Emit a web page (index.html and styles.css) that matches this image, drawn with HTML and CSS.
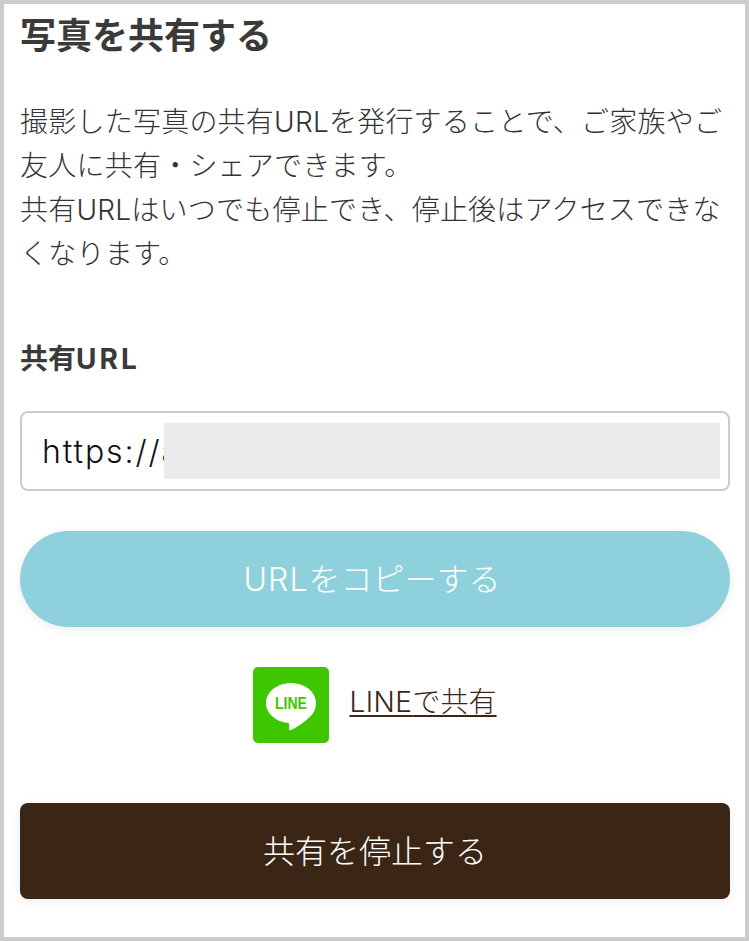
FILE: index.html
```html
<!DOCTYPE html>
<html lang="ja">
<head>
<meta charset="utf-8">
<title>写真を共有する</title>
<link rel="stylesheet" href="styles.css">
</head>
<body>
<main class="page">
  <h1 class="title">写真を共有する</h1>
  <p class="lead">撮影した写真の共有URLを発行することで、ご家族やご友人に共有・シェアできます。<br>共有URLはいつでも停止でき、停止後はアクセスできなくなります。</p>
  <h2 class="label">共有<span class="latin">URL</span></h2>
  <div class="url-box">
    <span class="url-text">https://a</span>
    <span class="url-mask"></span>
  </div>
  <button class="copy-btn" type="button"><span class="latin">URL</span>をコピーする</button>
  <div class="line-row">
    <svg class="line-icon" viewBox="0 0 76 76" aria-hidden="true">
      <rect width="76" height="76" rx="5" fill="#3ec700"/>
      <path d="M38 16c-13.800 0-25 8.900-25 20 0 9.900 8.900 18.200 21 19.800 1 .2 2 .6 2.200 1.300.1.700-.1 4.900-.1 5.400 0 .5.300 1.300 1.500.8 5-2.100 14.600-8.500 20-14 3.700-4 5.400-8.200 5.400-13.300 0-11.100-11.200-20-25-20z" fill="#fff"/>
      <text class="line-logo" x="22" y="42" textLength="32" lengthAdjust="spacingAndGlyphs">LINE</text>
    </svg>
    <a class="line-link" href="#"><span class="latin">LINE</span>で共有</a>
  </div>
  <button class="stop-btn" type="button">共有を停止する</button>
</main>
</body>
</html>
```

FILE: styles.css
```css
* { box-sizing: border-box; }
html, body { margin: 0; padding: 0; }
body {
  background: #fff;
  font-family: Inter, "Noto Sans CJK JP", sans-serif;
  color: #333;
}
.page {
  width: 749px;
  height: 941px;
  border: 4px solid #ccc;
  padding: 0 15px 0 16px;
  overflow: hidden;
}
.title {
  margin: 8px 0 0;
  font-size: 36px;
  line-height: 48px;
  font-weight: 700;
  color: #3a3a3a;
}
.lead {
  margin: 40px -4px 0 0;
  font-size: 28px;
  line-height: 44px;
  font-weight: 300;
  letter-spacing: .23px;
}
.label {
  margin: 61px 0 0;
  font-size: 28px;
  line-height: 44px;
  font-weight: 700;
  color: #3a3a3a;
}
.label .latin { letter-spacing: 3px; }
.url-box {
  position: relative;
  display: flex;
  align-items: center;
  height: 80px;
  margin-top: 30px;
  padding: 0 20px;
  border: 2px solid #ccc;
  border-radius: 8px;
}
.url-text {
  font-size: 32px;
  font-weight: 300;
  letter-spacing: 1.900px;
  color: #111;
}
.url-mask {
  position: absolute;
  top: 10px;
  left: 142px;
  right: 8px;
  height: 56px;
  background: #ebebeb;
}
.copy-btn {
  display: block;
  width: 100%;
  height: 96px;
  margin-top: 40px;
  padding: 0 6px 4px 0;
  border: 0;
  border-radius: 48px;
  background: #8ed0dc;
  color: #fff;
  font: 300 32px Inter, "Noto Sans CJK JP", sans-serif;
  box-shadow: 0 2px 10px rgba(0, 0, 0, .08);
}
.copy-btn .latin { letter-spacing: 1px; }
.line-row {
  display: flex;
  justify-content: center;
  align-items: center;
  gap: 20px;
  margin-top: 40px;
}
.line-icon { width: 76px; height: 76px; display: block; }
.line-logo {
  font-family: "Liberation Sans", sans-serif;
  font-size: 17px;
  font-weight: 700;
  fill: #3ec700;
}
.line-link {
  color: #3b2616;
  font-size: 28px;
  font-weight: 300;
  line-height: 40px;
  margin-top: -6px;
  text-decoration: underline;
  text-underline-offset: 3px;
}
.line-link .latin { letter-spacing: .5px; }
.stop-btn {
  display: block;
  width: 100%;
  height: 96px;
  margin-top: 60px;
  padding: 0 0 4px;
  border: 0;
  border-radius: 8px;
  background: #3b2616;
  color: #fff;
  font: 300 32px Inter, "Noto Sans CJK JP", sans-serif;
  box-shadow: 0 2px 10px rgba(0, 0, 0, .08);
}
```
